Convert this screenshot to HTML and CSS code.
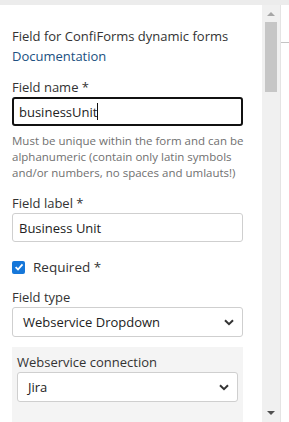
FILE: index.html
```html
<!DOCTYPE html>
<html lang="en">
<head>
  <meta charset="UTF-8" />
  <meta name="viewport" content="width=device-width, initial-scale=1.0"/>
  <title>Field settings</title>
  <link rel="stylesheet" href="styles.css">
</head>
<body>
  <div class="topbar"></div>

  <div class="main">
    <div class="panel">
      <p class="intro">
        Field for ConfiForms dynamic forms<br>
        <a href="#">Documentation</a>
      </p>

      <label class="label" for="fname">Field name *</label>
      <div class="input focused" id="fname">businessUnit<span class="caret"></span></div>
      <p class="help">Must be unique within the form and can be alphanumeric (contain only latin symbols and/or numbers, no spaces and umlauts!)</p>

      <label class="label label-gap">Field label *</label>
      <div class="input">Business Unit</div>

      <div class="check-row">
        <span class="checkbox">
          <svg width="10" height="10" viewBox="0 0 10 10"><path d="M1.6 5.2 L4 7.5 L8.5 2.3" fill="none" stroke="#fff" stroke-width="1.8"/></svg>
        </span>
        <span>Required *</span>
      </div>

      <label class="label">Field type</label>
      <div class="select">
        <span>Webservice Dropdown</span>
        <svg class="chevron" width="10" height="7" viewBox="0 0 10 7"><path d="M1 1.2 L5 5.2 L9 1.2" fill="none" stroke="#333" stroke-width="2"/></svg>
      </div>

      <div class="subbox">
        <label class="label">Webservice connection</label>
        <div class="select">
          <span>Jira</span>
          <svg class="chevron" width="10" height="7" viewBox="0 0 10 7"><path d="M1 1.2 L5 5.2 L9 1.2" fill="none" stroke="#333" stroke-width="2"/></svg>
        </div>
      </div>
    </div>

    <div class="scrollbar">
      <div class="sb-arrow">
        <svg width="8" height="5" viewBox="0 0 8 5"><path d="M0 5 L4 1 L8 5 Z" fill="#a6a6a6"/></svg>
      </div>
      <div class="sb-thumb"></div>
      <div class="sb-track"></div>
      <div class="sb-arrow">
        <svg width="8" height="5" viewBox="0 0 8 5"><path d="M0 0 L8 0 L4 4 Z" fill="#505050"/></svg>
      </div>
    </div>

    <div class="edge"><div class="edge-line"></div></div>
  </div>
</body>
</html>
```

FILE: styles.css
```css
body {
  margin: 0;
  background: #fff;
  font-family: "Open Sans", sans-serif;
  color: #333;
  height: 422px;
  overflow: hidden;
}

.topbar {
  height: 5px;
  background: #ececec;
}

.main {
  display: flex;
  height: 417px;
}

.panel {
  width: 250px;
  padding: 21px 0 0 12px;
  font-size: 13px;
  line-height: 20px;
  overflow: hidden;
}

.intro {
  margin: 0 19px 11px 0;
}

.intro a {
  color: #205081;
  text-decoration: none;
}

.label {
  display: block;
  margin-right: 19px;
}

.label-gap {
  margin-top: 12px;
}

.input {
  box-sizing: border-box;
  width: 231px;
  height: 29px;
  padding: 0 6px;
  border: 1px solid #cfcfcf;
  border-radius: 3px;
  display: flex;
  align-items: center;
  font-size: 13px;
  color: #222;
}

.input.focused {
  border: 2px solid #111;
  padding: 0 5px;
}

.caret {
  width: 1px;
  height: 17px;
  background: #111;
}

.help {
  width: 235px;
  margin: 7px 0 0;
  font-size: 11.5px;
  line-height: 16px;
  color: #707070;
}

.check-row {
  display: flex;
  align-items: center;
  gap: 8px;
  margin: 15px 0 10px;
  font-size: 13.5px;
}

.checkbox {
  width: 13px;
  height: 13px;
  border-radius: 2px;
  background: #1677d9;
  display: flex;
  align-items: center;
  justify-content: center;
}

.select {
  box-sizing: border-box;
  width: 231px;
  height: 30px;
  padding: 0 8px 0 10px;
  border: 1px solid #cfcfcf;
  border-radius: 3px;
  background: #fff;
  display: flex;
  align-items: center;
  justify-content: space-between;
  font-size: 13px;
  color: #222;
}

.subbox {
  width: 221px;
  margin-top: 10px;
  padding: 5px 5px 30px;
  background: #f4f4f4;
}

.subbox .select {
  width: 221px;
}

.scrollbar {
  width: 18px;
  background: #f0f0f0;
  display: flex;
  flex-direction: column;
  align-items: center;
}

.sb-arrow {
  height: 17px;
  display: flex;
  align-items: center;
  justify-content: center;
}

.sb-thumb {
  width: 12px;
  height: 70px;
  background: #c6c6c6;
}

.sb-track {
  flex: 1;
}

.edge {
  flex: 1;
  border-left: 1px solid #e4e4e4;
}

.edge-line {
  height: 1px;
  margin-top: 37px;
  background: #c4c4c4;
}
```
